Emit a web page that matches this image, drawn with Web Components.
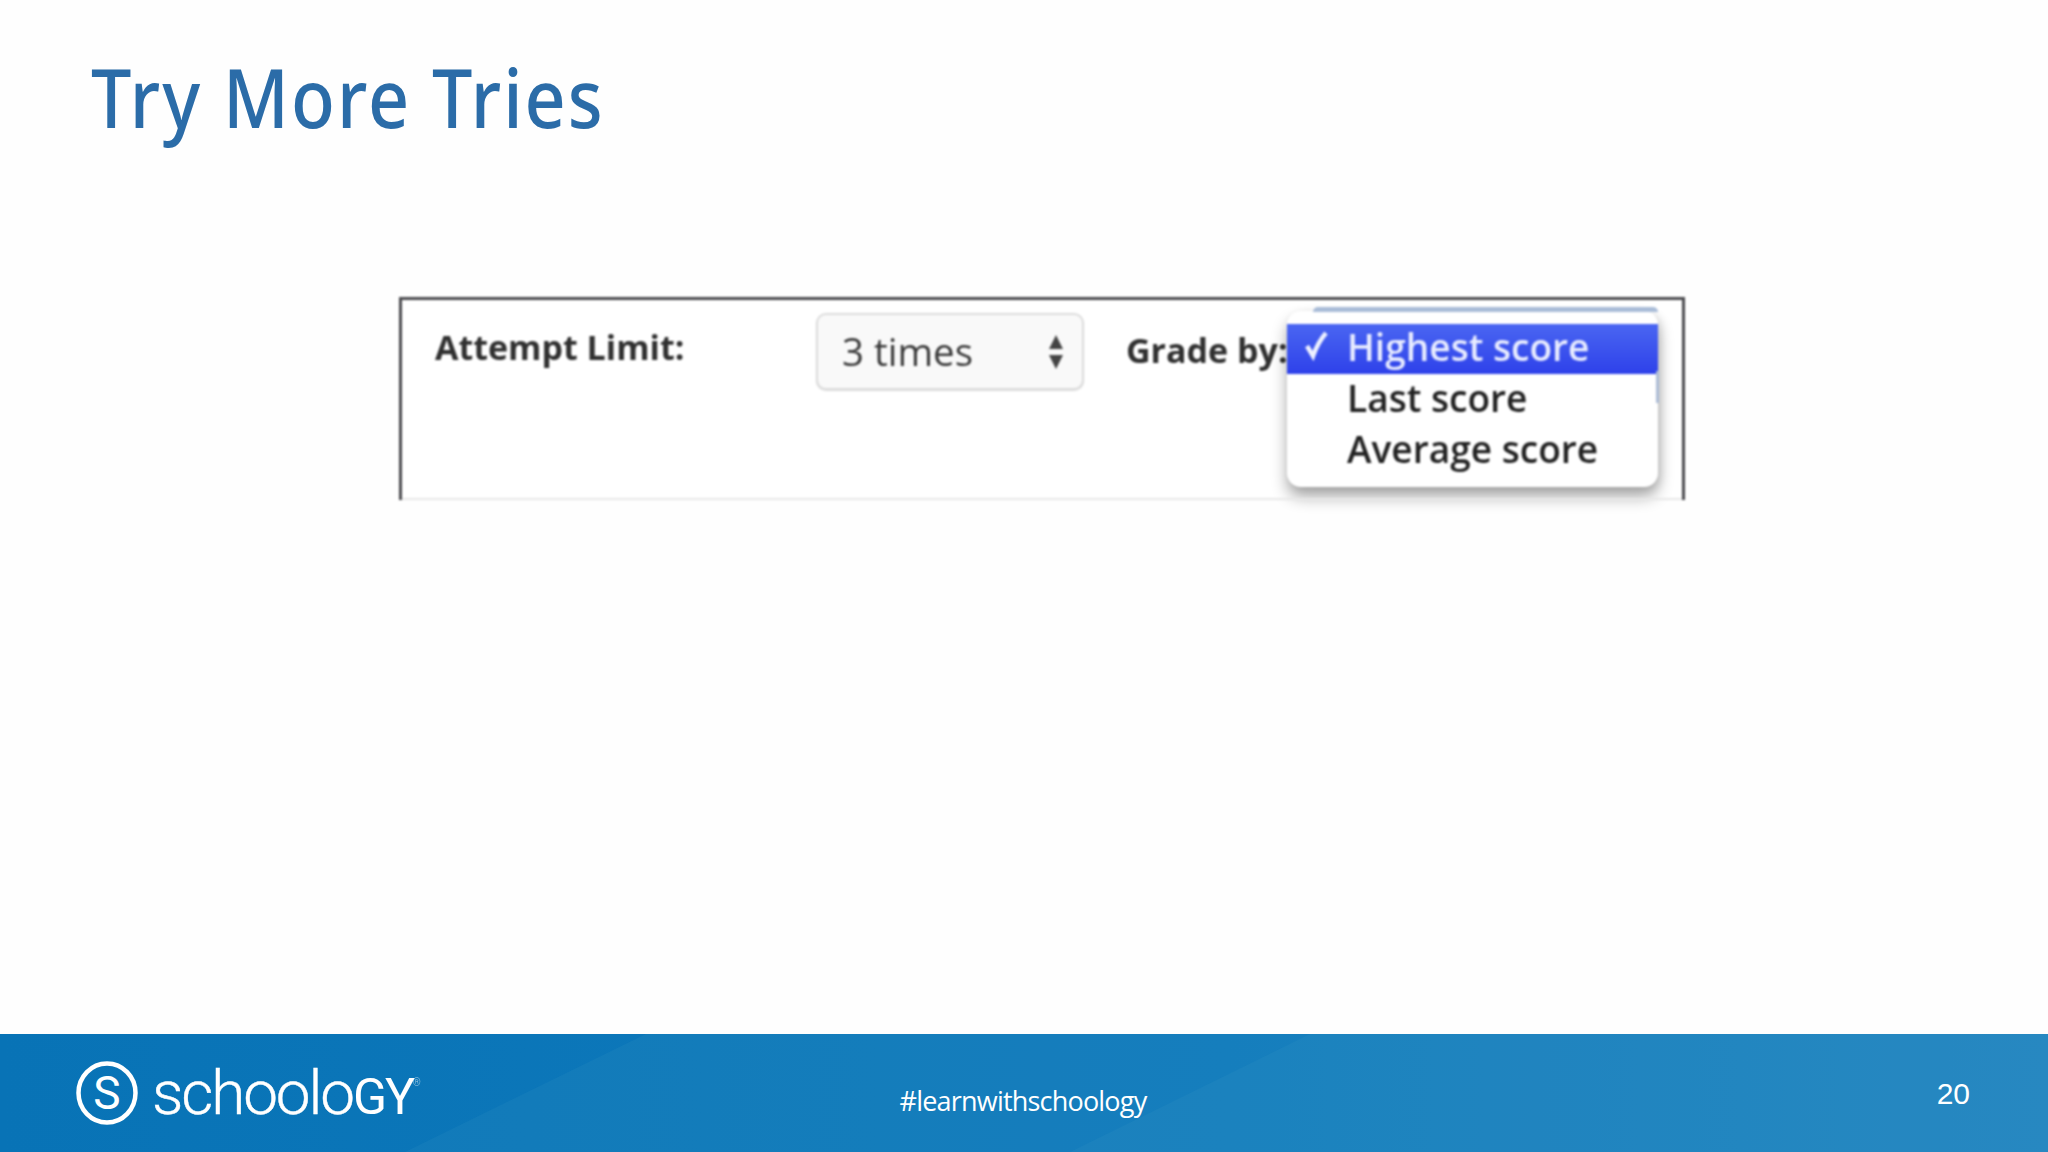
<!DOCTYPE html>
<html lang="en"><head><meta charset="utf-8"><title>Try More Tries</title>
<style>html,body{margin:0;padding:0;background:#fff}</style></head>
<body>
<slide-deck>
  <slide-title slot="title">Try More Tries</slide-title>
  <shot-panel slot="main"></shot-panel>
  <slide-footer slot="footer" tag="#learnwithschoology" page="20"></slide-footer>
</slide-deck>
<script>
function def(name, html, init){
  customElements.define(name, class extends HTMLElement{
    constructor(){super();const r=this.attachShadow({mode:'open'});r.innerHTML=typeof html==='function'?html(this):html;}
    connectedCallback(){ if(init) init(this); }
  });
}
def('slide-deck',`<style>
:host{display:flex;flex-direction:column;width:2048px;height:1152px;background:#fefefe;overflow:hidden}
.main{flex:1;min-height:0;padding-top:113px;display:flex;justify-content:flex-start;padding-left:399px}
</style><slot name="title"></slot><div class="main"><slot name="main"></slot></div><slot name="footer"></slot>`);

def('slide-title',`<style>
:host{display:block;height:184px;box-sizing:border-box;padding:41px 0 0 91px;font:500 81px/112px "Noto Sans",sans-serif;color:#2b6ca8;letter-spacing:2.3px}
span{display:inline-block;transform:scaleX(.887);transform-origin:0 0;white-space:nowrap}
</style><span><slot></slot></span>`);

def('fake-select',`<style>
:host{display:flex;align-items:center;justify-content:space-between;box-sizing:border-box;width:268px;height:77px;padding:0 17px 0 24px;border:2px solid #dcdcdc;border-radius:10px;background:#f9f9f9;color:#3a3a3a;font:500 38.5px/1 "Open Sans",sans-serif;box-shadow:0 1px 1px #ddd}
svg{display:block}
</style><slot></slot><svg width="18" height="36" viewBox="0 0 18 36"><path d="M9 1 16 15H2Z M9 35 2 21H16Z" fill="#444"/></svg>`);

def('popup-menu',`<style>
:host{position:absolute;left:885px;top:11px;width:371px;height:176px;box-sizing:border-box;padding-top:13px;background:#fff;border-radius:14px;box-shadow:0 10px 16px rgba(0,0,0,.33),3px 2px 8px rgba(0,0,0,.1);font:600 37.1px/51px "Open Sans",sans-serif;color:#222}
:host::before{content:"";position:absolute;left:26px;right:0;top:-4px;height:5px;background:#a9bcd8;border-radius:6px 6px 0 0}
:host::after{content:"";position:absolute;right:-1px;top:60px;height:32px;width:3px;background:#aebdd6}
.it{display:flex;height:51px;align-items:center;padding-left:60px;white-space:nowrap;position:relative;padding-bottom:5px;box-sizing:border-box}
.sel{background:linear-gradient(#4a66f2,#2e41ea);color:#e8ecff;height:50px;padding-bottom:6px}
.ck{position:absolute;left:14px;top:-3px;width:30px;height:50px}
</style>
<div class="it sel"><svg class="ck" viewBox="0 0 30 50"><path d="M6 25l6 10Q17 21 25 12" fill="none" stroke="#eef1ff" stroke-width="4.5"/></svg>Highest score</div>
<div class="it">Last score</div>
<div class="it">Average score</div>`);

def('shot-panel',`<style>
:host{display:block;position:relative;width:1286px;height:203px;box-sizing:border-box;border:solid #4a4a4e;border-width:3px 3px 0 3px;background:#fff;filter:blur(.9px)}
.line{position:absolute;left:0;right:0;bottom:0;height:2px;background:#e8e8e8}
.row{display:flex;align-items:flex-start;padding:13px 0 0 33px;color:#303030;font:700 34px/1 "Open Sans",sans-serif;white-space:nowrap}
.a{width:381px;padding-top:17px}
.b{margin-left:42px;padding-top:20px}
</style>
<div class="row"><div class="a">Attempt Limit:</div><fake-select>3 times</fake-select><div class="b">Grade by:</div></div>
<popup-menu></popup-menu><div class="line"></div>`);

def('brand-logo',`<style>
:host{display:flex;align-items:center;gap:14px;color:#fff}
svg{display:block}
.w{font:300 62px/1 Roboto,sans-serif;letter-spacing:-2.1px;white-space:nowrap;-webkit-text-stroke:.4px #fff}
.c{font-size:50px;font-weight:400;-webkit-text-stroke:0}
sup{font-size:10px;vertical-align:28px;opacity:.6;letter-spacing:0;-webkit-text-stroke:0}
</style>
<svg width="62" height="64" viewBox="0 0 62 64"><ellipse cx="31" cy="32" rx="28.5" ry="29.5" fill="none" stroke="#fff" stroke-width="4.5"/><text x="31" y="48" text-anchor="middle" font-family="Roboto,sans-serif" font-size="46" fill="#fff" font-weight="400">S</text></svg>
<span class="w">schoolo<span class="c">GY</span><sup>®</sup></span>`);

def('slide-footer',el=>`<style>
:host{display:block;position:relative;height:118px;flex:none;background:linear-gradient(90deg,#0873b6,#0f7abc 60%,#1f82bf);overflow:hidden;color:#fff}
.bg{position:absolute;inset:0}
.bar{position:relative;display:grid;grid-template-columns:1fr auto 1fr;align-items:center;height:100%;padding:0 78px 0 76px;box-sizing:border-box}
.tag{font:400 27px/1 "Open Sans",sans-serif;letter-spacing:-.8px;padding-top:14px}
.pg{justify-self:end;font:400 30px/1 "Liberation Sans",sans-serif;padding-top:1px}
</style>
<svg class="bg" width="2048" height="118"><polygon points="646,0 2048,0 2048,118 405,118" fill="#3f9ac8" opacity=".14"/><polygon points="1310,0 2048,0 2048,118 1070,118" fill="#3f9ac8" opacity=".14"/></svg>
<div class="bar"><brand-logo></brand-logo><div class="tag">${el.getAttribute('tag')||'#learnwithschoology'}</div><div class="pg">${el.getAttribute('page')||'20'}</div></div>`);
</script>
</body></html>
